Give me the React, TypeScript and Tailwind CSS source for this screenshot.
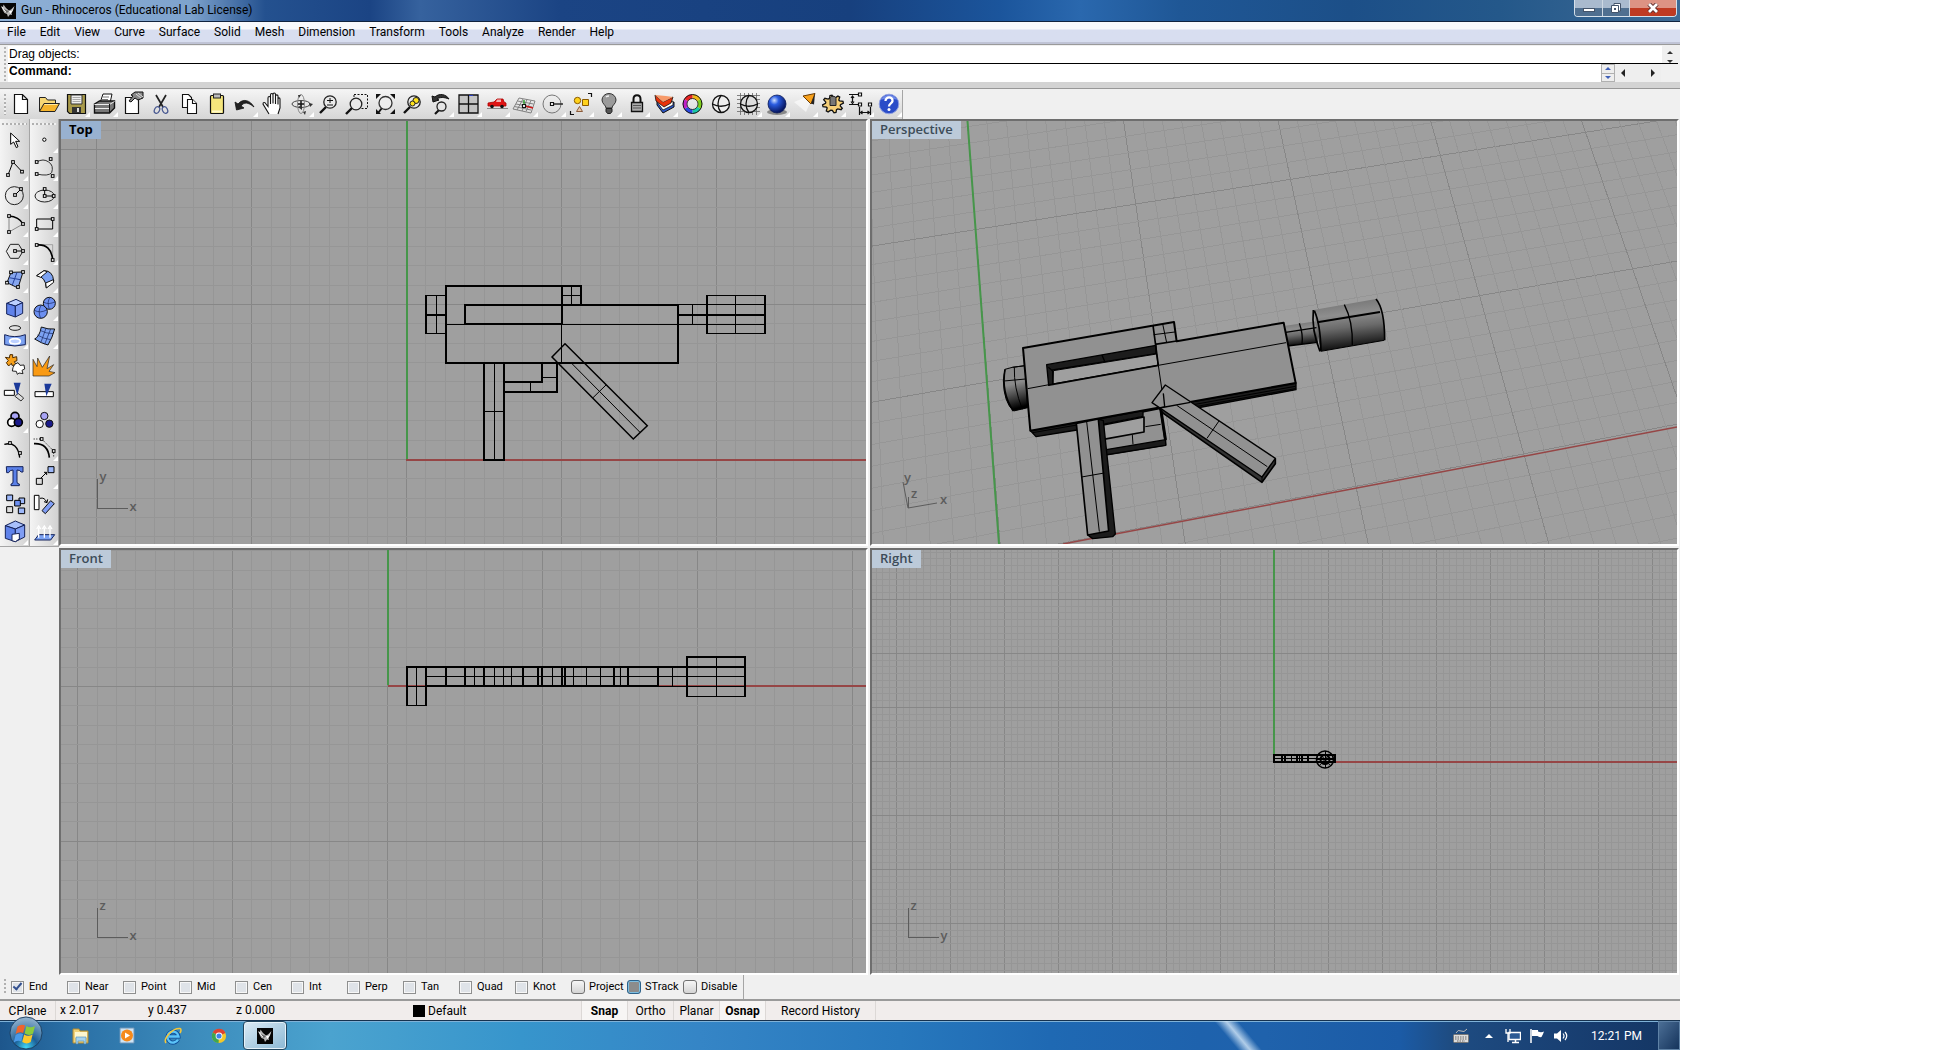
import { useState } from 'react';
import type { ReactNode } from 'react';

const menus = [
  'File', 'Edit', 'View', 'Curve', 'Surface', 'Solid', 'Mesh',
  'Dimension', 'Transform', 'Tools', 'Analyze', 'Render', 'Help',
];

const snaps = ['End', 'Near', 'Point', 'Mid', 'Cen', 'Int', 'Perp', 'Tan', 'Quad', 'Knot'];
const snapModes = ['Project', 'STrack', 'Disable'];

// Rhino head used in the title bar and on the task button
function RhinoLogo({ className }: { className: string }) {
  return (
    <svg viewBox="0 0 16 16" className={className} aria-hidden="true">
      <rect width="16" height="16" fill="#050505" />
      <path d="M1 3l2 1 .5-2.500L6 5l3 2.500 2-1L14.500 3 13 7.500l-1.500 2.500.5 2-2-.5L8 14l-1-3-2.500-1L3 7.500z" fill="#b8b8b8" />
      <path d="M4 5.500l2 1.500 3 1-2 2-2-1.500z" fill="#666" />
      <path d="M9 8l2.500 0L14 4l-2 4.500-1.500 2.500z" fill="#fff" />
      <path d="M2 4l2 3 2 2" fill="none" stroke="#fff" strokeWidth="0.800" />
    </svg>
  );
}

/* ---------- main toolbar ---------- */

const lens = (
  <>
    <path d="M12 17l-6 6" stroke="#111" strokeWidth="2.400" />
    <circle cx="16" cy="12" r="6.200" fill="#e9e9e9" stroke="#222" strokeWidth="1.300" />
  </>
);

// gear outline with eight square teeth
const gearPath = Array.from({ length: 32 }, (_, i) => {
  const angle = ((i - 0.5) * Math.PI) / 16 - Math.PI / 16;
  const r = i % 4 < 2 ? 10.5 : 7.5;
  return `${i === 0 ? 'M' : 'L'}${(15 + r * Math.cos(angle)).toFixed(1)} ${(14 + r * 0.85 * Math.sin(angle)).toFixed(1)}`;
}).join('') + 'z';

const tools: { name: string; flyout?: boolean; icon: ReactNode }[] = [
  { name: 'New', icon: <path d="M8.500 4.500h8l5 5v14h-13zM16.500 4.500v5h5" fill="#fff" stroke="#111" strokeWidth="1.200" /> },
  {
    name: 'Open',
    icon: (
      <>
        <path d="M5.500 21V7.500h6l2 2.500h8v4" fill="#f7d774" stroke="#222" />
        <path d="M5.500 21.500l4.500-8h15.500l-4.500 8z" fill="#f5b42c" stroke="#222" />
        <path d="M10.500 14.500h13" stroke="#ffe9a0" />
      </>
    ),
  },
  {
    name: 'Save',
    flyout: true,
    icon: (
      <>
        <path d="M5.500 4.500h18v19h-16l-2-2z" fill="#a89a4a" stroke="#111" strokeWidth="1.200" />
        <path d="M9 5h11v9H9z" fill="#eee" stroke="#333" />
        <path d="M10.500 7.500h8M10.500 9.500h8M10.500 11.500h8" stroke="#aaa" />
        <path d="M10 17h9v6h-9z" fill="#333" />
        <path d="M15 18h2v4h-2z" fill="#ddd" />
      </>
    ),
  },
  {
    name: 'Print',
    flyout: true,
    icon: (
      <>
        <path d="M10 13l3-9h9l-2 9z" fill="#fff" stroke="#111" />
        <path d="M13 7h6M12 9.500h6" stroke="#777" />
        <path d="M4.500 14l5-3h15v7l-5 5h-15z" fill="#777" stroke="#111" strokeWidth="1.400" />
        <path d="M4.500 14.500h15l5-3M5 18.500h14" stroke="#eee" fill="none" />
        <path d="M19.500 14v9" stroke="#111" />
      </>
    ),
  },
  {
    name: 'Properties',
    icon: (
      <>
        <path d="M7.500 7.500h13v16h-13z" fill="#fff" stroke="#111" strokeWidth="1.200" />
        <path d="M13 5l4-3h8v6l-5 2-3-2-4 4-2-1 4-5z" fill="#888" stroke="#111" />
        <path d="M18 4l5 4M20 3l5 4" stroke="#ddd" />
      </>
    ),
  },
  {
    name: 'Cut',
    icon: (
      <g fill="none">
        <path d="M10 5l7 12M20 5l-7 12" stroke="#222" strokeWidth="1.700" />
        <ellipse cx="11" cy="20" rx="2.500" ry="3.500" stroke="#4a5a92" strokeWidth="1.300" transform="rotate(25 11 20)" />
        <ellipse cx="19" cy="20" rx="2.500" ry="3.500" stroke="#4a5a92" strokeWidth="1.300" transform="rotate(-25 19 20)" />
      </g>
    ),
  },
  {
    name: 'Copy',
    icon: (
      <g fill="#fff" stroke="#111" strokeWidth="1.100">
        <path d="M8.500 4.500h6l3 3v10h-9z" />
        <path d="M13.500 9.500h5l4 4v10h-9z" />
        <path d="M18.500 9.500v4h4" />
      </g>
    ),
  },
  {
    name: 'Paste',
    icon: (
      <>
        <rect x="8.500" y="5.500" width="13" height="18" rx="1" fill="#f5e67c" stroke="#111" strokeWidth="1.200" />
        <path d="M10 21.500h10" stroke="#fff9c8" strokeWidth="2" />
        <rect x="11.500" y="4" width="7" height="4" fill="#bbb" stroke="#222" />
      </>
    ),
  },
  {
    name: 'Undo',
    flyout: true,
    icon: <path d="M5 12l1.500 8 7.500-2-3-2c3-4 7-4 13 1-4-7-11-9-16-3z" fill="#222" stroke="#111" strokeWidth="0.800" />,
  },
  {
    name: 'Pan',
    icon: (
      <path
        d="M11 24l-6-10c0-2 2-2 3 0l2 2.500V8c0-2 2.500-2 2.500 0V5c0-2 2.500-2 2.500 0V4.500c0-2 2.500-2 2.500 0V6c0-1.500 2.500-1.500 2.500 0v3c0-1.500 2-1.500 2 0v9l-2 6M12.500 7v7M15 5v8.500M17.500 6v8M20 8v6.500"
        fill="#fff" stroke="#111" strokeWidth="1.100"
      />
    ),
  },
  {
    name: 'Rotate view',
    flyout: true,
    icon: (
      <g fill="none" stroke="#444">
        <ellipse cx="15" cy="14" rx="9" ry="3.500" />
        <ellipse cx="15" cy="14" rx="3.500" ry="9.500" stroke="#888" />
        <path d="M15 11v6M12 14h6" stroke="#111" strokeWidth="1.500" />
        <path d="M12 17l4-2v5zM24 17l-1-4 4 1zM13 8l-1-3 3 0zM17 22l2 3 1-4z" fill="#333" stroke="none" />
      </g>
    ),
  },
  { name: 'Zoom dynamic', icon: <>{lens}<path d="M13 10.500h6M16 8v5M13 15h6" stroke="#111" /></> },
  {
    name: 'Zoom window',
    icon: (
      <>
        <path d="M12 4.500h13.500v14H12z" fill="none" stroke="#111" strokeDasharray="2 1.500" />
        <path d="M10 18l-6 6" stroke="#111" strokeWidth="2.400" />
        <circle cx="14" cy="14" r="5.800" fill="#e9e9e9" stroke="#222" strokeWidth="1.300" />
      </>
    ),
  },
  {
    name: 'Zoom extents',
    icon: (
      <>
        <path d="M12 18l-4 5" stroke="#111" strokeWidth="2" />
        <circle cx="15.500" cy="13" r="6.500" fill="#eee" stroke="#333" strokeWidth="1.300" />
        <path d="M6 4h5l-5 5zM25 4v5l-5-5zM25 24h-5l5-5zM6 24v-5l5 5z" fill="#111" />
      </>
    ),
  },
  {
    name: 'Zoom selected',
    icon: <>{lens}<circle cx="18" cy="10.500" r="3" fill="#ffe21c" stroke="#222" /><circle cx="14.500" cy="13.500" r="2.500" fill="#ffe21c" stroke="#222" /></>,
  },
  {
    name: 'Undo view change',
    flyout: true,
    icon: (
      <>
        <path d="M6 6l1 6 6-2-2-1c3-2 7-2 12 0-3-5-10-6-14-2z" fill="#333" stroke="#111" />
        <path d="M13 20l-4 4" stroke="#111" strokeWidth="2.200" />
        <circle cx="15.500" cy="16.500" r="4.500" fill="#e5e5e5" stroke="#222" strokeWidth="1.300" />
      </>
    ),
  },
  {
    name: 'Four viewports',
    flyout: true,
    icon: (
      <>
        <path d="M5 5h19v18H5z" fill="#c4c4c4" stroke="#111" strokeWidth="1.300" />
        <path d="M14.500 5v18M5 14h19" stroke="#111" strokeWidth="1.300" />
        <path d="M15 5.500h4" stroke="#2a3fc0" />
      </>
    ),
  },
  {
    name: 'Named view',
    flyout: true,
    icon: (
      <>
        <path d="M5 18.500h21" stroke="#888" />
        <path d="M6 13l6-1 3-3h6l1 3 2 1v3H6z" fill="#e01414" stroke="#a00" strokeWidth="0.800" />
        <path d="M15 9.500h4v2.500h-5z" fill="#f2b0b0" />
        <circle cx="10" cy="16.500" r="1.800" fill="#111" /><circle cx="20" cy="16.500" r="1.800" fill="#111" />
      </>
    ),
  },
  {
    name: 'Set CPlane',
    flyout: true,
    icon: (
      <>
        <path d="M9 8l16 3-4 12-18-4zM7.500 11l16 3M6 14l16 3M4.500 16.500l16.500 3.500M13 9l-6 11M17 9.500L12 21M21 10.500l-5 11" fill="none" stroke="#777" strokeWidth="0.900" />
        <path d="M14 16v-6" stroke="#1a9a1a" strokeWidth="1.300" />
        <path d="M15 16l8 2" stroke="#d01818" strokeWidth="1.500" />
        <path d="M12.500 14.500h3v3h-3z" fill="#fff" stroke="#111" strokeWidth="1.200" />
      </>
    ),
  },
  {
    name: 'Object snap',
    flyout: true,
    icon: (
      <>
        <circle cx="14" cy="14" r="9" fill="none" stroke="#777" />
        <path d="M15 14h10" stroke="#111" strokeWidth="1.300" />
        <path d="M12.500 12.500h3v3h-3z" fill="#fff" stroke="#111" strokeWidth="1.200" />
      </>
    ),
  },
  {
    name: 'Select',
    flyout: true,
    icon: (
      <>
        <circle cx="11.500" cy="10.500" r="3.200" fill="#ffd21c" stroke="#8a5a00" />
        <path d="M16.500 9.500h6v6h-6z" fill="#ffd21c" stroke="#8a5a00" />
        <path d="M13.500 16.500l3 5h-6z" fill="#e8c9a8" stroke="#8a5a3a" />
        <path d="M22 3.500h3.500V7M4.500 21v3.500H8" fill="none" stroke="#111" strokeWidth="1.200" />
      </>
    ),
  },
  {
    name: 'Hide',
    flyout: true,
    icon: (
      <>
        <path d="M12 18c0-3-4-4-4-8a7 6.500 0 0 1 14 0c0 4-4 5-4 8z" fill="#9a9a9a" stroke="#333" />
        <path d="M12 7c1-1 2-1 3-1" stroke="#eee" strokeWidth="1.500" fill="none" />
        <path d="M12 18.500h6v3l-1.500 2h-3l-1.500-2z" fill="#555" stroke="#222" />
      </>
    ),
  },
  {
    name: 'Lock',
    flyout: true,
    icon: (
      <>
        <path d="M11.500 13V9c0-5 7-5 7 0v4" fill="none" stroke="#111" strokeWidth="2" />
        <path d="M9.500 12.500h11v9h-11z" fill="#aaa" stroke="#111" strokeWidth="1.300" />
        <path d="M11 15.500h8M11 18h8" stroke="#555" />
      </>
    ),
  },
  {
    name: 'Layers',
    flyout: true,
    icon: (
      <>
        <path d="M7 15l6 8 11-6v-5l-10 5-7-5z" fill="#2c57c8" stroke="#111" />
        <path d="M7 12l6 8 10-5v-4l-9 4-7-5z" fill="#fff" stroke="#111" strokeWidth="0.800" />
        <path d="M5 5l8 7 10-5-2 6-7 4-8-6z" fill="#e8320a" stroke="#111" strokeWidth="0.800" />
        <path d="M5 5l8 7 10-5-7-1z" fill="#f79a6a" />
      </>
    ),
  },
  {
    name: 'Object colour',
    icon: (
      <g fill="none" strokeWidth="4">
        <path d="M14.500 6.500A7.500 7.500 0 0 1 21 10" stroke="#f0b818" />
        <path d="M21 10A7.500 7.500 0 0 1 21 18" stroke="#7fd01c" />
        <path d="M21 18A7.500 7.500 0 0 1 14.500 21.500" stroke="#18c8a8" />
        <path d="M14.500 21.500A7.500 7.500 0 0 1 8 18" stroke="#2a48e0" />
        <path d="M8 18A7.500 7.500 0 0 1 8 10" stroke="#c020c8" />
        <path d="M8 10A7.500 7.500 0 0 1 14.500 6.500" stroke="#e82424" />
        <circle cx="14.500" cy="14" r="9.500" stroke="#111" strokeWidth="1" />
        <circle cx="14.500" cy="14" r="5.500" stroke="#111" strokeWidth="0.800" />
      </g>
    ),
  },
  {
    name: 'Shade',
    icon: (
      <g fill="none" stroke="#111" strokeWidth="1.300">
        <circle cx="15" cy="14" r="8.500" fill="#eee" />
        <path d="M15 5.500c-4 5-4 12 0 17M6.500 14c5 3 12 3 17 0" />
      </g>
    ),
  },
  {
    name: 'Render preview',
    flyout: true,
    icon: (
      <g fill="none" stroke="#111" strokeWidth="1.300">
        <path d="M6.500 3v22M10.500 3v22M14.500 3v22M18.500 3v22M22.500 3v22M3 5.500h23M3 9.500h23M3 13.500h23M3 17.500h23M3 21.500h23" stroke="#666" strokeWidth="0.800" />
        <circle cx="15" cy="14" r="8.500" fill="#ddd" />
        <path d="M15 5.500c-4 5-4 12 0 17M6.500 14c5 3 12 3 17 0" />
      </g>
    ),
  },
  {
    name: 'Render',
    flyout: true,
    icon: (
      <>
        <ellipse cx="15" cy="22" rx="10" ry="3" fill="#888" />
        <circle cx="15" cy="14" r="9" fill="url(#ball)" stroke="#0a1a5a" strokeWidth="0.800" />
      </>
    ),
  },
  {
    name: 'Spotlight',
    flyout: true,
    icon: (
      <>
        <path d="M24 4L4 12l12 10z" fill="#fff" opacity="0.600" />
        <path d="M25 3.500l-12 2.500 8 8z" fill="#f7a11c" stroke="#6a3a00" />
        <path d="M25 3.500l-1 11-3-1z" fill="#222" />
      </>
    ),
  },
  {
    name: 'Options',
    flyout: true,
    icon: (
      <>
        <path d={gearPath} fill="#f5cf78" stroke="#111" strokeWidth="1.300" />
        <path d="M12 8.500c0-3 6-3 6 0v7h-6z" fill="#777" stroke="#222" />
      </>
    ),
  },
  {
    name: 'Dimension',
    flyout: true,
    icon: (
      <g fill="none" stroke="#111" strokeWidth="1.200">
        <path d="M3 4.500h9M6.500 7v5M3 14.500h9M13.500 17v8M24.500 17v8M15 22.500h8" />
        <path d="M5 8l1.500-2L8 8M5 11.500l1.500 2 1.500-2M16.500 21l-2 1.500 2 1.500M21.500 21l2 1.500-2 1.500" />
        <path d="M12.500 3h3v3h-3zM12.500 13h3v3h-3zM22.500 13h3v3h-3z" fill="#fff" />
      </g>
    ),
  },
  {
    name: 'Help',
    flyout: true,
    icon: (
      <>
        <circle cx="15" cy="14" r="9.800" fill="#2a4cc8" stroke="#8f9fe0" />
        <path d="M7 10a9 9 0 0 1 16 0c-5-2-11-2-16 0z" fill="#6d88e8" />
        <path d="M11.500 11c0-5 7.500-4.500 7 0-.3 2.500-3.500 2.500-3.500 5.500" fill="none" stroke="#fff" strokeWidth="2.300" />
        <circle cx="15" cy="19.500" r="1.500" fill="#fff" />
      </>
    ),
  },
];

/* ---------- side toolbox ---------- */

// small white grip handle, centred on x,y
function H({ x, y }: { x: number; y: number }) {
  return <rect x={x - 4} y={y - 4} width="8" height="8" fill="#fff" stroke="#000" strokeWidth="3" />;
}

// Both columns are drawn on one sheet (84 units per cell), each button shows its own cell.
const toolbox: { name: string; flyout?: boolean; icon: ReactNode }[][] = [
  [
    { name: 'Pointer', icon: <path d="M32 72v34l9-7 8 17 5-3-7-16h12z" fill="#fff" stroke="#000" strokeWidth="3" /> },
    { name: 'Polyline', flyout: true, icon: <><path d="M24 198l15-39 27 29" fill="none" stroke="#000" strokeWidth="3" /><H x={24} y={198} /><H x={39} y={159} /><H x={66} y={188} /></> },
    { name: 'Circle', flyout: true, icon: <><circle cx="43" cy="260" r="27" fill="none" stroke="#222" strokeWidth="3" /><path d="M45 258l18-18" stroke="#000" strokeWidth="3" /><H x={45} y={258} /><H x={63} y={240} /></> },
    { name: 'Arc', flyout: true, icon: <><path d="M27 321v48l42-24" fill="none" stroke="#888" strokeWidth="3" /><path d="M27 321q30 2 42 24" fill="none" stroke="#000" strokeWidth="4" /><H x={27} y={321} /><H x={27} y={369} /><H x={69} y={345} /></> },
    { name: 'Polygon', flyout: true, icon: <><path d="M19 427l12-21h25l13 21-13 21H31z" fill="none" stroke="#222" strokeWidth="3" /><path d="M45 426h24" stroke="#000" strokeWidth="3" /><H x={45} y={426} /><H x={69} y={426} /></> },
    { name: 'Surface from points', flyout: true, icon: <><path d="M33 490l36-1-15 48-33-16z" fill="#86a6ef" stroke="#111" strokeWidth="3" /><path d="M51 490l-14 38M27 506l34 6" stroke="#24409a" strokeWidth="3" /><H x={33} y={490} /><H x={69} y={489} /><H x={54} y={537 - 3} /><H x={21} y={521} /></> },
    { name: 'Box', flyout: true, icon: <g stroke="#14225a" strokeWidth="3"><path d="M20 583l28-12 20 10-22 10z" fill="#bcd0ff" /><path d="M20 583l26 8v33l-26-9z" fill="#5f82ea" /><path d="M46 591l22-10v32l-22 11z" fill="#7f9df4" /></g> },
    { name: 'Surface of revolution', flyout: true, icon: <><ellipse cx="45" cy="657" rx="17" ry="7" fill="none" stroke="#222" strokeWidth="3" /><path d="M14 677q30 12 62 0v30q-32 8-62 0z" fill="#7ca2f2" stroke="#14225a" strokeWidth="3" /><ellipse cx="45" cy="697" rx="16" ry="8" fill="#bcd0ff" stroke="#fff" strokeWidth="5" /></> },
    { name: 'Explode block', icon: <><path d="M16 745l12 2 2-10 8 0 0 9 12-3 1 12-8 3 6 10-13 1-2-6-8 8-7-10 6-6z" fill="#f7a11c" stroke="#4a2a00" strokeWidth="3" /><path d="M44 766l10-5 6 8 12-1 2 12-8 4 3 10-12-2-5 4-3-9-12-1 2-10z" fill="#fff" stroke="#222" strokeWidth="3" /></> },
    { name: 'Trim', icon: <><path d="M13 844h30v15H13z" fill="#fff" stroke="#000" strokeWidth="3" /><path d="M45 862l9-9 17 14-8 9z" fill="#ddd" stroke="#333" strokeWidth="3" /><path d="M41 821h21l-10 38z" fill="#1c3a9a" /></> },
    { name: 'Group', flyout: true, icon: <g stroke="#000" strokeWidth="5"><circle cx="45" cy="922" r="12" fill="#a8a4f5" /><circle cx="35" cy="940" r="12" fill="#fff" /><circle cx="55" cy="940" r="12" fill="#1a1a8a" /></g> },
    { name: 'Control points', icon: <><path d="M13 1006q40-10 46 40" fill="none" stroke="#000" strokeWidth="4" /><H x={30} y={1002} /><H x={60} y={1032} /></> },
    { name: 'Text', icon: <path d="M19 1073h50v16h-6q-2-6-12-6v36q0 6 7 6v5H33v-5q6 0 6-6v-36q-10 0-13 8h-6z" fill="#5a80e8" stroke="#14225a" strokeWidth="3" /> },
    { name: 'Array', icon: <g stroke="#000" strokeWidth="3"><path d="M20 1158h18v17H20zM57 1167h17v17H57zM55 1197h19v17H55z" fill="#9db8fa" /><path d="M44 1174h17v17H44z" fill="#6d90f0" /><path d="M20 1193h18v18H20z" fill="#ddd" /></g> },
    { name: 'Cap', flyout: true, icon: <g stroke="#14225a" strokeWidth="3"><path d="M16 1250l30-14 28 12-28 12z" fill="#a8c0fc" /><path d="M16 1250l30 10v38l-30-10z" fill="#5f82ea" /><path d="M46 1260l28-12v36l-28 14z" fill="#7f9df4" /><path d="M36 1276l22-3v17l-12 8-10-3z" fill="#fff" /></g> },
  ],
  [
    { name: 'Point', flyout: true, icon: <circle cx="131" cy="92" r="5" fill="#fff" stroke="#000" strokeWidth="3" /> },
    { name: 'Curve', flyout: true, icon: <><path d="M108 159q20-12 36 0 16 10 9 32-10 12-45 4" fill="none" stroke="#333" strokeWidth="3" /><H x={108} y={159} /><H x={150} y={150} /><H x={156} y={201} /><H x={108} y={195} /></> },
    { name: 'Ellipse', flyout: true, icon: <><ellipse cx="132" cy="261" rx="29" ry="18" fill="none" stroke="#222" strokeWidth="3" /><path d="M132 240v21h27" fill="none" stroke="#000" strokeWidth="3" /><H x={132} y={240} /><H x={132} y={261} /><H x={159} y={261} /></> },
    { name: 'Rectangle', flyout: true, icon: <><path d="M108 330h48v30h-48z" fill="none" stroke="#000" strokeWidth="3" /><H x={156} y={330} /><H x={108} y={360} /></> },
    { name: 'Fillet', flyout: true, icon: <><path d="M108 407h48v46" fill="none" stroke="#888" strokeWidth="2" /><path d="M108 408q44-4 48 45" fill="none" stroke="#000" strokeWidth="5" /><H x={108} y={408} /><H x={156} y={453} /></> },
    { name: 'Sweep', flyout: true, icon: <g stroke="#111" strokeWidth="3"><path d="M108 500l22-15q26 0 29 30l-22 22q-2-34-29-37z" fill="#7ca2f2" /><path d="M108 500l22-15 10 3-20 17zM135 522l23-10 1 8-22 17z" fill="#fff" /></g> },
    { name: 'Boolean union', flyout: true, icon: <g fill="#6d90f0" stroke="#111" strokeWidth="3"><circle cx="146" cy="583" r="18" /><circle cx="120" cy="608" r="20" /><path d="M101 604q18 10 38-2M122 588q-12 18-2 40M130 580q14 8 34-2M148 565q-10 14-2 36" fill="none" stroke="#14225a" strokeWidth="2" /></g> },
    { name: 'Surface mesh', flyout: true, icon: <><path d="M102 690q14-6 20-36 20 8 40 6-6 24-20 48-18-4-40-18z" fill="#7ca2f2" stroke="#111" strokeWidth="3" /><path d="M110 678q20 12 40 14M118 664q18 10 40 10M136 658l-16 44M150 660l-18 46" fill="none" stroke="#14225a" strokeWidth="2" /></> },
    { name: 'Explode', icon: <path d="M97 801v-50l12 22 2-26 14 28 22-34-8 38 20-12-14 20 18 4-18 10z" fill="#f99a14" stroke="#222" strokeWidth="2" /> },
    { name: 'Split', icon: <><path d="M103 848h55v15h-55z" fill="#fff" stroke="#000" strokeWidth="3" /><path d="M131 824h22l-16 38z" fill="#1c3a9a" /></> },
    { name: 'Ungroup', icon: <g stroke="#111" strokeWidth="3"><circle cx="131" cy="921" r="11" fill="#a8a4f5" /><circle cx="117" cy="945" r="11" fill="#fff" /><circle cx="146" cy="944" r="11" fill="#1a1a8a" /></g> },
    { name: 'Edit points', flyout: true, icon: <><path d="M99 990h24l36 36v20" fill="none" stroke="#000" strokeWidth="3" strokeDasharray="3 5" /><path d="M100 1004q42-2 46 42" fill="none" stroke="#000" strokeWidth="5" /><H x={123} y={990} /><H x={159} y={1026} /></> },
    { name: 'Move', flyout: true, icon: <><path d="M120 1108l18-18M130 1090h8v8" fill="none" stroke="#000" strokeWidth="3" /><path d="M107 1108h18v18h-18z" fill="#ddd" stroke="#000" strokeWidth="3" /><path d="M142 1073h18v18h-18z" fill="#9db8fa" stroke="#000" strokeWidth="3" /></> },
    { name: 'Rotate', icon: <><path d="M101 1159h14v43h-14z" fill="#fff" stroke="#000" strokeWidth="3" /><path d="M118 1168q14-4 20 12M130 1178l9 3 2-10" fill="none" stroke="#000" strokeWidth="3" /><path d="M124 1205l26-30 11 9-27 30z" fill="#7f9df4" stroke="#111" strokeWidth="3" /></> },
    { name: 'Project to plane', flyout: true, icon: <><path d="M102 1293l12-16h48l-12 16z" fill="#7ca2f2" stroke="#14225a" strokeWidth="3" /><path d="M114 1286v-30M131 1286v-30M148 1286v-30M108 1260l6-9 6 9M125 1260l6-9 6 9M142 1260l6-9 6 9" fill="none" stroke="#fff" strokeWidth="4" /></> },
  ],
];

/* ---------- viewports ---------- */

type Origin = { x: number; y: number };

const VW = 805;
const VH = 423;

// Flat construction plane grid, heavy line every 8 steps from the origin
function FlatGrid({ left, top, origin, step }: { left: number; top: number; origin: Origin; step: number }) {
  const lines: ReactNode[] = [];
  for (let i = Math.ceil((left - origin.x) / step); origin.x + i * step < left + VW; i++) {
    const x = Math.floor(origin.x + i * step) + 0.5;
    lines.push(<path key={'v' + i} d={`M${x} ${top}v${VH}`} stroke={i % 8 === 0 ? '#878787' : '#969696'} />);
  }
  for (let j = Math.ceil((top - origin.y) / step); origin.y + j * step < top + VH; j++) {
    const y = Math.floor(origin.y + j * step) + 0.5;
    lines.push(<path key={'h' + j} d={`M${left} ${y}h${VW}`} stroke={j % 8 === 0 ? '#878787' : '#969696'} />);
  }
  return <g shapeRendering="crispEdges">{lines}</g>;
}

// ground plane to screen, u and v in units of 8 grid steps
function project(u: number, v: number) {
  const w = 1 + 0.019 * u + 0.0676 * v;
  return `${((1001 + 203.2 * u + 53.3 * v) / w).toFixed(1)} ${((555 - 25.1 * u - 147.2 * v) / w).toFixed(1)}`;
}

function PerspectiveGrid() {
  const lines: ReactNode[] = [];
  for (let i = -24; i <= 48; i++) {
    const color = i % 8 === 0 ? '#878787' : '#969696';
    lines.push(<path key={'u' + i} d={`M${project(i / 8, -2)}L${project(i / 8, 6)}`} stroke={color} />);
    lines.push(<path key={'v' + i} d={`M${project(-3, i / 8)}L${project(6, i / 8)}`} stroke={color} />);
  }
  return <g shapeRendering="crispEdges">{lines}</g>;
}

function AxisIcon({ x, y, up, right }: { x: number; y: number; up: string; right: string }) {
  return (
    <g>
      <path d={`M${x} ${y - 30}v30h30`} fill="none" stroke="#5c5c5c" shapeRendering="crispEdges" />
      <g className="fill-[#5c5c5c] font-[Open_Sans,sans-serif] text-[13px] font-semibold">
        <text x={x + 2} y={y - 28}>{up}</text>
        <text x={x + 32} y={y + 2}>{right}</text>
      </g>
    </g>
  );
}

function TopScene() {
  return (
    <>
      <FlatGrid left={61} top={121} origin={{ x: 406.6, y: 459.4 }} step={19.36} />
      <g fill="none" strokeWidth="2" shapeRendering="crispEdges">
        <path d="M406 460h460" stroke="#964646" />
        <path d="M407 121v338" stroke="#46964a" />
        <path
          d="M446 286h135v19h97v58H446zM562 286v38h-97v-19h116M426 295v39M426 315h20M678 315h87M707 295v39M765 295v39M484 363v97h20v-97M542 363v19h-38M557 363v29h-53"
          stroke="#000"
        />
        <path
          strokeWidth="1"
          d="M446 324.500h319M561.500 324v39M571.500 286v19M562 295.500h19M426 295.500h20M426 333.500h20M436.500 295v39M678 304.500h87M692.500 304v20M707 295.500h58M707 333.500h58M735.500 295v39M494.500 363v97M484 411.500h20M530.500 382v10M542 377.500h15"
          stroke="#000"
        />
      </g>
      <path d="M565 343.700l82.300 82-14 13.300-81.300-82z" fill="none" stroke="#000" strokeWidth="1.500" />
      <path d="M572 363.700l68 68.600M606 385l-13 12.700" stroke="#000" />
      <AxisIcon x={97.5} y={508.5} up="y" right="x" />
    </>
  );
}

function FrontScene() {
  return (
    <>
      <FlatGrid left={61} top={550} origin={{ x: 387.4, y: 686.4 }} step={19.36} />
      <g fill="none" strokeWidth="2" shapeRendering="crispEdges">
        <path d="M388 686h478" stroke="#964646" />
        <path d="M388 550v135" stroke="#46964a" />
        <path
          d="M407 706v-39h338M426 667v39M426 686h232M446 667v19M465 667v19M484 667v19M523 667v19M538 667v19M542 667v19M562 667v19M565 667v19M614 667v19M628 667v19M658 667v19M687 697v-40h58v40"
          stroke="#000"
        />
        <path
          strokeWidth="1"
          d="M426 676.500h319M407 705.500h19M407 686.500h19M416.500 667v39M474.500 667v19M494.500 667v19M503.500 667v19M511.500 667v19M552.500 667v19M573.500 667v19M586.500 667v19M600.500 667v19M620.500 667v19M672.500 667v19M658 686.500h87M687 696.500h58M716.500 657v40"
          stroke="#000"
        />
      </g>
      <AxisIcon x={97.5} y={937.5} up="z" right="x" />
    </>
  );
}

function RightScene() {
  return (
    <>
      <FlatGrid left={872} top={550} origin={{ x: 1274.3, y: 761.3 }} step={6.75} />
      <g fill="none" strokeWidth="2" shapeRendering="crispEdges">
        <path d="M1274 762h403" stroke="#964646" />
        <path d="M1274 550v205" stroke="#46964a" />
        <path d="M1274 755h61v7h-61zM1282 755v7M1285 755v7M1297 755v7M1302 755v7M1308 755v7" stroke="#000" />
        <path d="M1274 758.500h61M1291.500 755v7M1299.500 755v7M1325.500 751v17M1316 759.500h18" strokeWidth="1" stroke="#000" />
      </g>
      <g fill="none" stroke="#000">
        <circle cx="1325" cy="759.500" r="8.500" strokeWidth="1.600" />
        <circle cx="1325" cy="759.500" r="4.500" strokeWidth="2" />
        <path d="M1319 753l12 13M1331 753l-12 13" />
      </g>
      <AxisIcon x={908.5} y={937.5} up="z" right="y" />
    </>
  );
}

// Shaded model, drawn at three units per pixel
function ShadedGun() {
  return (
    <g transform="translate(980 280) scale(0.33333)" fill="none" stroke="#000" strokeWidth="4" strokeLinejoin="round">
      <path d="M75 268l22-6 38-5 8 126-42 10q-30-26-31-92z" fill="url(#knob)" strokeWidth="3" />
      <path d="M135 257l-38 5M103 262q-2 60 24 126M72 303l65-6" strokeWidth="3" />
      <path d="M75 268q-12 70 25 125" strokeWidth="5" />

      <path d="M917 137l96-14v64l-91 11z" fill="url(#barrel)" stroke="none" />
      <path d="M917 157l97-15M958 130q12 34 8 62M922 198l91-11" strokeWidth="4" />

      <path d="M1000 90l188-33q26 30 26 124l-192 33z" fill="url(#barrel)" stroke="none" />
      <path d="M1000 90q-6 60 20 124M1188 57q26 30 26 124M1003 92q18 40 20 120" strokeWidth="5" />
      <path d="M1093 74q26 50 24 122" strokeWidth="4" />
      <path d="M1012 127l188-31" strokeWidth="6" />
      <path d="M1022 214l190-33" strokeWidth="3" />

      {/* trigger guard */}
      <path d="M366 420l174-35 17 110-181 29-10-14z" fill="#919191" strokeWidth="5" />
      <path d="M366 511l191-32v17l-181 29z" fill="#1c1c1c" />
      <path d="M370 435l122-24v45l-122 22z" fill="#9f9f9f" strokeWidth="5" />
      <path d="M496 440l46-7M457 465l2 28" strokeWidth="3" />
      <path d="M543 388l14 92" strokeWidth="8" />

      {/* dark underside */}
      <path d="M151 452l140-24v22L168 470z" fill="#1c1c1c" />
      <path d="M355 417l134-25v17l-123 24z" fill="#1c1c1c" />
      <path d="M630 366l318-57v20L650 384z" fill="#1c1c1c" />
      <path d="M158 458l133-23M640 374l306-55M646 380l300-54" strokeWidth="3" stroke="#000" />

      {/* receiver */}
      <path d="M129 204l453-78 8 58 321-56 36 181-796 143z" fill="#919191" strokeWidth="6" />
      <path d="M200 254l328-58v25l-310 49v44l-12 2z" fill="#1c1c1c" />
      <path d="M220 272l310-50 4 34-316 56z" fill="#9f9f9f" strokeWidth="3" />
      <path d="M205 262l14 12v40M366 226l8 18" strokeWidth="4" />
      <path d="M143 326l75-14" strokeWidth="3" />
      <path d="M218 313l317-57" strokeWidth="5" />
      <path d="M535 256l383-68M535 256l18 124" strokeWidth="3" />
      <path d="M519 136l16 120M525 193l65-10" strokeWidth="5" />
      <path d="M548 132l12 56M521 164l64-8" strokeWidth="3" />

      {/* grip */}
      <path d="M355 417l15 5 36 340-8 8-60 6-14-10z" fill="#1c1c1c" />
      <path d="M289 430l66-13 31 336-63 12z" fill="#919191" strokeWidth="5" />
      <path d="M320 425l38 330M305 591l68-12" strokeWidth="3" />

      {/* front handle */}
      <path d="M537 383l14 18 295 206 40-56v-16" fill="#333" strokeWidth="5" />
      <path d="M556 315l330 220-40 56-330-223z" fill="#919191" strokeWidth="4" />
      <path d="M846 591v14M590 376l272 184M717 423l-36 52" strokeWidth="3" />
      <path d="M550 340l4 40-15 4 92-17" strokeWidth="4" />
    </g>
  );
}

function PerspectiveScene() {
  return (
    <>
      <defs>
        <linearGradient id="barrel" x1="0" y1="0" x2="0.150" y2="1">
          <stop offset="0" stopColor="#6e6e6e" />
          <stop offset="0.350" stopColor="#8e8e8e" />
          <stop offset="0.600" stopColor="#6a6a6a" />
          <stop offset="1" stopColor="#0e0e0e" />
        </linearGradient>
        <linearGradient id="knob" x1="0" y1="0" x2="0.150" y2="1">
          <stop offset="0" stopColor="#8a8a8a" />
          <stop offset="0.450" stopColor="#8a8a8a" />
          <stop offset="1" stopColor="#000" />
        </linearGradient>
      </defs>
      <PerspectiveGrid />
      <path d="M967.500 121L999 544" stroke="#46964a" strokeWidth="2" />
      <path d="M1063 544l357-68 257-49" fill="none" stroke="#964646" strokeWidth="1.500" />
      <ShadedGun />
      <path d="M903 482l5 26 29-5M908.500 508v-11" fill="none" stroke="#5c5c5c" />
      <g className="fill-[#5c5c5c] font-[Open_Sans,sans-serif] text-[13px] font-semibold">
        <text x="904" y="482">y</text>
        <text x="911" y="498">z</text>
        <text x="940" y="504">x</text>
      </g>
    </>
  );
}

const viewports = [
  { name: 'Top', x: 61, y: 121, scene: <TopScene /> },
  { name: 'Perspective', x: 872, y: 121, scene: <PerspectiveScene /> },
  { name: 'Front', x: 61, y: 550, scene: <FrontScene /> },
  { name: 'Right', x: 872, y: 550, scene: <RightScene /> },
];

function Viewport({ view, active, onSelect }: { view: (typeof viewports)[number]; active: boolean; onSelect: () => void }) {
  return (
    <section className="relative min-h-0 min-w-0 overflow-hidden border-2 border-t-[#6e6e6e] border-r-white border-b-white border-l-[#6e6e6e] bg-[#9f9f9f]">
      <svg
        viewBox={`${view.x} ${view.y} ${VW} ${VH}`}
        preserveAspectRatio="xMinYMin slice"
        className="block h-full w-full"
        aria-label={view.name + ' viewport'}
      >
        {view.scene}
      </svg>
      <button
        onClick={onSelect}
        className={`absolute top-0 left-0 h-[18px] px-2 text-[13px] leading-[15px] ${active ? 'bg-[#98b1d0] font-bold text-black' : 'bg-[#bccad9] font-semibold text-[#3c4c58]'}`}
      >
        <span className="block pb-[2px]">{view.name}</span>
      </button>
    </section>
  );
}

/* ---------- bars ---------- */

function TitleBar() {
  return (
    <header className="flex h-[22px] items-start justify-between border-b border-[#10233f] bg-[linear-gradient(90deg,#8fb0d6_0,#7ea3cd_190px,#24518f_265px,#1b4484_370px,#36629e_420px,#1b4484_560px,#17407e_850px,#1b559c_1000px,#2a68ae_1080px,#1f5796_1180px,#1c4f88_1350px,#24588a_1500px,#3d6a95_100%)]">
      <div className="flex items-center gap-[5px]">
        <RhinoLogo className="h-4 w-4" />
        <h1 className="font-[Roboto,sans-serif] text-xs leading-[21px]">Gun - Rhinoceros (Educational Lab License)</h1>
      </div>
      <div className="mr-[3px] flex h-[17px] overflow-hidden rounded-b border border-t-0 border-[#d5e0ea]">
        <button aria-label="Minimize" className="flex w-7 items-center justify-center border-r border-[#cdd8e3] bg-gradient-to-b from-[#a9bace] from-50% to-[#4f6f90] to-50%">
          <span className="mt-1 h-1 w-3 border border-[#44546a] bg-white" />
        </button>
        <button aria-label="Restore" className="flex w-[27px] items-center justify-center border-r border-[#cdd8e3] bg-gradient-to-b from-[#a9bace] from-50% to-[#4f6f90] to-50%">
          <svg viewBox="0 0 12 12" className="h-3 w-3">
            <path d="M4 1.500h6.500V9H4z" fill="#fff" stroke="#44546a" />
            <path d="M1.500 3.500h7v7h-7z" fill="#fff" stroke="#44546a" />
            <path d="M4 6h2v2H4z" fill="#44546a" />
          </svg>
        </button>
        <button aria-label="Close" className="flex w-[46px] items-center justify-center bg-gradient-to-b from-[#dd9384] from-50% to-[#bf3a22] to-50%">
          <svg viewBox="0 0 12 10" className="h-[10px] w-3">
            <path d="M2 1l8 8M10 1L2 9" stroke="#5a2a2a" strokeWidth="4.500" />
            <path d="M2 1l8 8M10 1L2 9" stroke="#fff" strokeWidth="2.800" />
          </svg>
        </button>
      </div>
    </header>
  );
}

function CommandArea() {
  const [command, setCommand] = useState('');
  return (
    <div className="flex h-[45px] flex-col border-b border-[#979797] bg-[#d3d3d3]">
      <div className="flex h-[38px] border-t border-[#9a9a9a] bg-[#f0f0f0] pt-px pr-[2px]">
        <div className="my-px mr-[2px] ml-1 w-[2px] bg-[repeating-linear-gradient(#b5b5b5_0_2px,#f0f0f0_2px_4px)]" />
        <div className="flex min-w-0 flex-1 flex-col font-[Liberation_Sans,sans-serif] text-xs">
          <div className="flex h-[18px] border-b border-black bg-white">
            <p className="flex-1 pl-px leading-[16px]">Drag objects:</p>
            <div className="flex w-4 flex-col items-center justify-between bg-[#f0f0f0] pt-[5px]">
              <span className="border-x-[3px] border-b-[3px] border-x-transparent border-b-[#333]" />
              <span className="border-x-[3px] border-t-[3px] border-x-transparent border-t-[#333]" />
            </div>
          </div>
          <div className="flex h-[18px] bg-white">
            <label htmlFor="command" className="pl-px leading-[15px] font-bold">Command:</label>
            <input
              id="command"
              value={command}
              onChange={(e) => setCommand(e.target.value)}
              className="min-w-0 flex-1 px-1 outline-none"
            />
            <div className="flex w-[14px] flex-col gap-px border border-[#b0b0b0] bg-[#b0b0b0]">
              <button aria-label="Previous command" className="flex flex-1 items-center justify-center bg-[#eee]">
                <span className="border-x-[3px] border-b-[3px] border-x-transparent border-b-[#4060b8]" />
              </button>
              <button aria-label="Next command" className="flex flex-1 items-center justify-center bg-[#eee]">
                <span className="border-x-[3px] border-t-[3px] border-x-transparent border-t-[#4060b8]" />
              </button>
            </div>
            <div className="flex w-[46px] items-center justify-between bg-[#eee] px-[6px]">
              <span className="border-y-[4px] border-r-[4px] border-y-transparent border-r-[#222]" />
              <span className="border-y-[4px] border-l-[4px] border-y-transparent border-l-[#222]" />
            </div>
            <div className="w-[17px] bg-[#f0f0f0]" />
          </div>
        </div>
      </div>
    </div>
  );
}

function FlyoutMark() {
  return <span className="absolute right-0 bottom-px border-b-[5px] border-l-[5px] border-b-white border-l-transparent" />;
}

function Toolbar() {
  return (
    <div className="flex h-[30px] items-center bg-[#f0f0f0]">
      <div className="flex h-[29px] border-r border-[#a5a5a5] bg-gradient-to-b from-[#f4f4f4] to-[#d6d6d6] pl-1">
        <div className="my-1 w-[2px] bg-[repeating-linear-gradient(#b0b0b0_0_2px,#f0f0f0_2px_4px)]" />
        {tools.map((tool) => (
          <button key={tool.name} title={tool.name} aria-label={tool.name} className="relative h-7 w-7">
            <svg viewBox="0 0 28 28" className="h-7 w-7">
              <defs>
                <radialGradient id="ball" cx="0.350" cy="0.300" r="0.700">
                  <stop offset="0" stopColor="#cfe0ff" />
                  <stop offset="0.350" stopColor="#2a5ce0" />
                  <stop offset="1" stopColor="#06145c" />
                </radialGradient>
              </defs>
              {tool.icon}
            </svg>
            {tool.flyout && <FlyoutMark />}
          </button>
        ))}
      </div>
    </div>
  );
}

function Toolbox() {
  return (
    <aside className="flex w-[59px] shrink-0 items-start bg-[#f0f0f0]">
      {toolbox.map((column, c) => (
        <div key={c} className="flex flex-1 flex-col border-r border-b border-[#a5a5a5] bg-gradient-to-r from-[#f4f4f4] to-[#d2d2d2] pt-1">
          <div className="mx-[2px] mb-px h-[2px] bg-[repeating-linear-gradient(90deg,#b0b0b0_0_2px,#f0f0f0_2px_4px)]" />
          {column.map((tool, r) => (
            <button key={tool.name} title={tool.name} aria-label={tool.name} className="relative h-7 w-7">
              <svg viewBox={`${c * 88} ${51 + r * 84} 84 84`} className="h-7 w-7">{tool.icon}</svg>
              {tool.flyout && <FlyoutMark />}
            </button>
          ))}
        </div>
      ))}
    </aside>
  );
}

function SnapBar() {
  const [checked, setChecked] = useState<string[]>(['End']);
  const toggle = (name: string) =>
    setChecked((list) => (list.includes(name) ? list.filter((n) => n !== name) : [...list, name]));

  return (
    <div className="flex h-[26px] border-b-2 border-[#9a9a9a] bg-[#f0f0f0]">
      <div className="flex items-center border-r border-[#a5a5a5] pr-1 pl-1">
        <div className="mr-[5px] h-4 w-[2px] bg-[repeating-linear-gradient(#b0b0b0_0_2px,#f0f0f0_2px_4px)]" />
        {snaps.map((name) => (
          <label key={name} className="flex w-14 items-center gap-[5px] text-[11px]">
            <input
              type="checkbox"
              checked={checked.includes(name)}
              onChange={() => toggle(name)}
              className="relative h-[13px] w-[13px] shrink-0 appearance-none border border-[#8e8f8f] bg-[#dfe3e8] shadow-[inset_0_0_0_1px_#f7f7f7] checked:before:absolute checked:before:top-[-1px] checked:before:left-[3px] checked:before:h-[9px] checked:before:w-[5px] checked:before:rotate-40 checked:before:border-r-2 checked:before:border-b-2 checked:before:border-[#33508f]"
            />
            {name}
          </label>
        ))}
        {snapModes.map((name) => (
          <button key={name} className="flex w-14 items-center gap-1 text-[11px]">
            <span className={`h-[14px] w-[14px] shrink-0 rounded-[3px] border ${name === 'STrack' ? 'border-[#2c628b] bg-[#8c8c8c] shadow-[inset_0_0_0_1px_#7dbde0]' : 'border-[#707070] bg-gradient-to-b from-[#f6f6f6] to-[#d4d4d4]'}`} />
            {name}
          </button>
        ))}
      </div>
    </div>
  );
}

function StatusBar() {
  return (
    <div className="flex h-[19px] bg-[#f1edec] text-xs leading-[18px]">
      <button className="w-14 border-r border-[#dcd8d6]">CPlane</button>
      <span className="w-[88px] pl-1">x 2.017</span>
      <span className="w-[88px] pl-1">y 0.437</span>
      <span className="w-[178px] pl-1">z 0.000</span>
      <button className="flex w-[172px] items-center gap-[3px] border-r border-[#dcd8d6] pl-[3px]">
        <span className="h-3 w-3 bg-black" />
        Default
      </button>
      <button className="w-[46px] border-r border-[#dcd8d6] bg-[#f7f5f4] font-bold">Snap</button>
      <button className="w-[46px] border-r border-[#dcd8d6]">Ortho</button>
      <button className="w-[46px] border-r border-[#dcd8d6]">Planar</button>
      <button className="w-[46px] border-r border-[#dcd8d6] bg-[#f7f5f4] font-bold">Osnap</button>
      <button className="w-[110px] border-r border-[#dcd8d6]">Record History</button>
    </div>
  );
}

function TaskBar() {
  return (
    <footer className="relative flex h-[30px] items-stretch border-t border-[#16324f] bg-[linear-gradient(90deg,#1d568c_0,#2a6fa5_70px,#3d8dbd_200px,#4ba3cf_330px,#3795cc_520px,#3585c6_700px,#2778bd_900px,#1f69b3_1050px,#1e62ad_1200px,#1f62ac_1265px,#1b5ba6_1400px,#1e4c82_1450px,#173c6e_1600px,#143562_100%)] text-white shadow-[inset_0_1px_0_#7fb2d8]">
      {/* wallpaper light showing through the glass */}
      <span className="absolute top-0 left-[73%] h-full w-6 skew-x-[40deg] bg-gradient-to-r from-white/0 via-[#d5e8f8]/80 to-white/0" />
      <button aria-label="Start" className="absolute bottom-0 left-[9px] h-[34px] w-[34px]">
        <svg viewBox="0 0 36 36" className="h-full w-full">
          <defs>
            <radialGradient id="orb" cx="0.500" cy="0.950" r="0.900">
              <stop offset="0" stopColor="#3fd8f8" />
              <stop offset="0.400" stopColor="#1c5f98" />
              <stop offset="1" stopColor="#8fb0cc" />
            </radialGradient>
          </defs>
          <circle cx="18" cy="18" r="17" fill="url(#orb)" stroke="#1c3f60" />
          <path d="M9 11q4-3 8-1l-2 8q-4-2-8 1z" fill="#f0642c" />
          <path d="M18.500 10.500q4 3 9 0l-2 8q-4 3-9 0z" fill="#8ccc3c" />
          <path d="M7 20q4-3 8-1l-2 8q-4-2-8 1z" fill="#4a9ae8" />
          <path d="M16 19.500q4 3 9 0l-2 8q-4 3-9 0z" fill="#fcc82c" />
        </svg>
      </button>
      <nav className="ml-[58px] flex" aria-label="Pinned programs">
        <button aria-label="Explorer" className="flex w-[46px] items-center justify-center">
          <svg viewBox="0 0 18 18" className="h-[18px] w-[18px]">
            <path d="M1 2h6l1 2h8v12H1z" fill="#f0d27a" stroke="#b08a30" />
            <path d="M3 5h12v6H3z" fill="#fdf6cf" />
            <path d="M4 10h10v7h-2v-3H6v3H4z" fill="#a7d3ee" stroke="#4a8ab8" strokeWidth="0.600" />
          </svg>
        </button>
        <button aria-label="Media Player" className="flex w-[46px] items-center justify-center">
          <svg viewBox="0 0 18 18" className="h-[18px] w-[18px]">
            <path d="M2 1h14v15H2z" fill="#cfe4f4" stroke="#6a94b8" />
            <circle cx="9" cy="8.500" r="6" fill="#f58a1c" />
            <path d="M7 5.500l5 3-5 3z" fill="#fff" />
          </svg>
        </button>
        <button aria-label="Internet Explorer" className="flex w-[46px] items-center justify-center">
          <svg viewBox="0 0 18 18" className="h-[18px] w-[18px]">
            <path d="M14 12.500a5.500 5.500 0 1 1 .5-3H5" fill="none" stroke="#0f4f9a" strokeWidth="4" />
            <path d="M14 12.500a5.500 5.500 0 1 1 .5-3H5" fill="none" stroke="#5cc4f8" strokeWidth="2.400" />
            <path d="M2 16C-1 12 8 1 16 1.500c1.500.500 1 3 0 4.500" fill="none" stroke="#f3c63a" strokeWidth="1.600" />
          </svg>
        </button>
        <button aria-label="Chrome" className="flex w-[46px] items-center justify-center">
          <svg viewBox="0 0 18 18" className="h-4 w-4">
            <circle cx="9" cy="9" r="8" fill="#f3c82a" />
            <path d="M9 9L2 5a8 8 0 0 1 14.200.500z" fill="#dd4232" />
            <path d="M9 9L2 5a8 8 0 0 0 6.500 12z" fill="#3fa650" />
            <circle cx="9" cy="9" r="3.800" fill="#fff" />
            <circle cx="9" cy="9" r="2.900" fill="#3f83e8" />
          </svg>
        </button>
        <button aria-label="Rhinoceros" className="ml-px flex w-11 items-center justify-center rounded-sm border border-[#21465f] bg-gradient-to-br from-[#dcebf5] to-[#8ab8d4] shadow-[inset_0_0_0_1px_#e6f2f9]">
          <RhinoLogo className="h-4 w-4" />
        </button>
      </nav>
      <div className="ml-auto flex items-center">
        <svg viewBox="0 0 16 16" className="mr-4 h-4 w-4" aria-label="Keyboard">
          <path d="M3 5q2-4 5-2t6-2" fill="none" stroke="#b8b8b8" />
          <rect x="0.500" y="6.500" width="15" height="8" rx="1" fill="#ddd" stroke="#777" />
          <path d="M2 9h12M2 11h12M4 13h8" stroke="#666" strokeDasharray="1.500 1" />
        </svg>
        <span className="mr-3 border-x-4 border-b-4 border-x-transparent border-b-white" />
        <svg viewBox="0 0 16 16" className="mr-2 h-4 w-4" aria-label="Network">
          <path d="M4 4.500h11.500v7H4z" fill="#2c5a94" stroke="#fff" strokeWidth="1.400" />
          <path d="M7 14.500h7M10.500 12v2" stroke="#fff" strokeWidth="1.500" />
          <path d="M1 1v4h4V1M3 5v9" fill="none" stroke="#fff" strokeWidth="1.300" />
        </svg>
        <svg viewBox="0 0 16 16" className="mr-2 h-4 w-4" aria-label="Action Center">
          <path d="M2 1v14" stroke="#fff" strokeWidth="1.500" />
          <path d="M3 2h6v1.500q3 1.500 6 0-1 3-2.500 5.500Q10 9.500 8.500 8H3z" fill="#fff" />
        </svg>
        <svg viewBox="0 0 16 16" className="mr-[22px] h-4 w-4" aria-label="Volume">
          <path d="M1 5.500h3L8 2v12l-4-3.500H1z" fill="#fff" />
          <path d="M10 5.500q2 2.500 0 5M12 4q3.500 4 0 8" fill="none" stroke="#fff" strokeWidth="1.200" />
        </svg>
        <time className="mr-4 text-xs">12:21 PM</time>
        <button aria-label="Show desktop" className="h-[29px] w-[22px] border border-[#5f82a6] bg-gradient-to-br from-[#4c6f96] to-[#15345c]" />
      </div>
    </footer>
  );
}

export default function App() {
  const [active, setActive] = useState('Top');

  return (
    <div className="min-h-screen bg-white">
      <div className="flex h-screen w-full max-w-[1680px] flex-col overflow-hidden font-[Roboto,sans-serif] text-black">
        <TitleBar />
        <nav className="flex h-[22px] gap-[14px] border-b-2 border-b-[#c0c4d6] bg-gradient-to-b from-[#f8f9fc] from-35% to-[#d8def0] to-40% pl-[7px] text-xs leading-[19px]">
          {menus.map((menu) => (
            <button key={menu}>{menu}</button>
          ))}
        </nav>
        <CommandArea />
        <Toolbar />
        <main className="flex min-h-0 flex-1">
          <Toolbox />
          <div className="grid min-w-0 flex-1 grid-cols-2 grid-rows-2 gap-[2px] bg-[#f0f0f0] pr-px font-[Open_Sans,sans-serif]">
            {viewports.map((view) => (
              <Viewport key={view.name} view={view} active={active === view.name} onSelect={() => setActive(view.name)} />
            ))}
          </div>
        </main>
        <SnapBar />
        <StatusBar />
        <TaskBar />
      </div>
    </div>
  );
}
